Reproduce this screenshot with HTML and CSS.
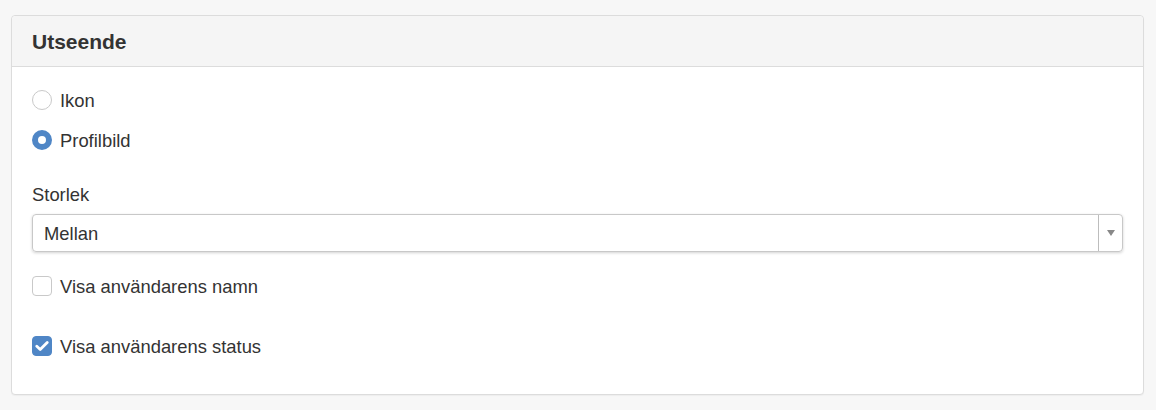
FILE: index.html
```html
<!DOCTYPE html>
<html lang="sv">
<head>
<meta charset="utf-8">
<link rel="stylesheet" href="styles.css">
</head>
<body>
<div class="panel">
  <div class="panel-heading"><h3 class="panel-title">Utseende</h3></div>
  <div class="panel-body">
    <label class="opt"><span class="radio"></span><span class="txt">Ikon</span></label>
    <label class="opt"><span class="radio checked"></span><span class="txt">Profilbild</span></label>
    <div class="field-label">Storlek</div>
    <div class="select">
      <span class="select-value">Mellan</span>
      <span class="select-arrow"><svg width="8" height="6" viewBox="0 0 8 6"><path d="M0 0h8L4 6z" fill="#888"/></svg></span>
    </div>
    <label class="opt opt-check"><span class="check"></span><span class="txt">Visa användarens namn</span></label>
    <label class="opt opt-check"><span class="check checked"><svg width="14" height="12" viewBox="0 0 14 12"><path d="M1.8 6.2 5.2 9.4 12.2 2.4" fill="none" stroke="#fff" stroke-width="2.8" stroke-linecap="round" stroke-linejoin="round"/></svg></span><span class="txt">Visa användarens status</span></label>
  </div>
</div>
</body>
</html>
```
FILE: styles.css
```css
html, body { margin: 0; }
body {
  background: #f7f7f7;
  padding: 15px 12px 15px 11px;
  font-family: "Liberation Sans", Arial, Helvetica, sans-serif;
  color: #333;
  font-size: 18.4px;
}
.panel {
  background: #fff;
  border: 1px solid #dcdcdc;
  border-radius: 4px;
  box-shadow: 0 1px 1px rgba(0,0,0,.04);
}
.panel-heading {
  background: #f5f5f5;
  border-bottom: 1px solid #dcdcdc;
  border-radius: 4px 4px 0 0;
  height: 51px;
  padding: 0 20px;
  box-sizing: border-box;
  display: flex;
  align-items: center;
}
.panel-title {
  margin: 0;
  font-size: 21px;
  font-weight: bold;
  color: #333;
  line-height: 24px;
  padding-top: 1px;
}
.panel-body {
  padding: 13px 20px 28px 20px;
  display: flex;
  flex-direction: column;
}
.opt {
  display: flex;
  align-items: center;
  gap: 8px;
  height: 40px;
  line-height: 24px;
}
.txt { padding-top: 2px; }
.radio {
  width: 20px;
  height: 20px;
  box-sizing: border-box;
  border: 1px solid #c9c9c9;
  border-radius: 50%;
  background: #fff;
}
.radio.checked {
  border: 6px solid #4f86c6;
  background: #fff;
}
.field-label {
  margin-top: 23px;
  line-height: 24px;
  margin-bottom: 7px;
}
.select {
  height: 38px;
  box-sizing: border-box;
  border: 1px solid #c8c8c8;
  border-radius: 4px;
  box-shadow: 0 1px 3px rgba(0,0,0,.18);
  display: flex;
  align-items: stretch;
}
.select-value {
  flex: 1;
  padding-left: 11px;
  padding-top: 2px;
  display: flex;
  align-items: center;
}
.select-arrow {
  width: 23px;
  border-left: 1px solid #bdbdbd;
  display: flex;
  align-items: center;
  justify-content: center;
}
.opt-check { margin-top: 14px; }
.opt-check + .opt-check { margin-top: 20px; }
.check {
  width: 20px;
  height: 20px;
  box-sizing: border-box;
  border: 1px solid #c9c9c9;
  border-radius: 4px;
  background: #fff;
  display: flex;
  align-items: center;
  justify-content: center;
}
.check.checked {
  background: #4f86c6;
  border-color: #4f86c6;
}
```
